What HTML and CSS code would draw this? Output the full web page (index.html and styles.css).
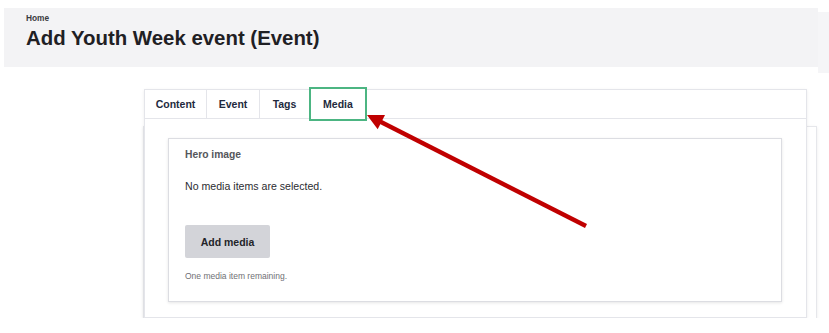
FILE: index.html
```html
<!DOCTYPE html>
<html lang="en">
<head>
    <meta charset="UTF-8">
    <meta name="viewport" content="width=device-width, initial-scale=1.0">
    <title>Add Youth Week event (Event)</title>
    <link rel="stylesheet" href="styles.css">
</head>
<body>
    <div class="top">
        <header class="page-title">
            <div class="crumb">Home</div>
            <h1>Add Youth Week event (Event)</h1>
        </header>
        <div class="edge"></div>
    </div>
    <main class="form-wrap">
        <div class="card">
            <ul class="tabs">
                <li class="tab tab-content">Content</li>
                <li class="tab tab-event">Event</li>
                <li class="tab tab-tags">Tags</li>
                <li class="tab tab-media active">Media</li>
            </ul>
            <div class="panel">
                <div class="field-box">
                    <div class="field-label">Hero image</div>
                    <p class="empty">No media items are selected.</p>
                    <button class="add-btn">Add media</button>
                    <p class="hint">One media item remaining.</p>
                </div>
            </div>
        </div>
    </main>
    <!-- annotation arrow pointing at the Media tab -->
    <svg class="arrow" width="829" height="333" viewBox="0 0 829 333">
        <line x1="586" y1="226" x2="380" y2="121.5" stroke="#c00000" stroke-width="4.5"/>
        <polygon points="367,115 385,115 377.7,129.3" fill="#c00000"/>
    </svg>
</body>
</html>
```

FILE: styles.css
```css
* {
    margin: 0;
    padding: 0;
    box-sizing: border-box;
}
body {
    font-family: "Liberation Sans", Arial, sans-serif;
    color: #232429;
    background: #fff;
}
ul {
    list-style: none;
}
.top {
    display: flex;
    align-items: flex-start;
    padding: 8px 0 0 4px;
}
.page-title {
    width: 814px;
    height: 59px;
    padding: 5px 0 0 22px;
    background: #f3f3f5;
}
.crumb {
    font-size: 8.3px;
    line-height: 10px;
    font-weight: bold;
    color: #3a3b40;
}
.page-title h1 {
    margin-top: 3px;
    font-size: 20.4px;
    line-height: 24px;
    font-weight: bold;
    color: #1f2024;
}
.edge {
    width: 11px;
    height: 61px;
    margin-top: 4px;
    background: #f5f5f7;
}
.form-wrap {
    padding: 16px 0 0 144px;
}
.card {
    position: relative;
    width: 663px;
    background: #fff;
    border: 1px solid #e4e5ea;
    box-shadow: 0 1px 3px rgba(0, 0, 0, 0.08);
}
/* second sheet peeking out beneath the card */
.card::after {
    content: "";
    position: absolute;
    top: 36px;
    left: -2px;
    right: -11px;
    bottom: -8px;
    z-index: -1;
    background: #fff;
    border: 1px solid #e6e7eb;
    box-shadow: 0 1px 3px rgba(0, 0, 0, 0.08);
}
.tabs {
    display: flex;
    height: 29px;
    border-bottom: 1px solid #e4e5ea;
}
.tab {
    height: 28px;
    line-height: 28px;
    text-align: center;
    font-size: 10.5px;
    font-weight: bold;
    color: #222a3d;
    border-right: 1px solid #e4e5ea;
}
.tab-content {
    width: 62px;
}
.tab-event {
    width: 53px;
}
.tab-tags {
    width: 49px;
    border-right: none;
}
.tab-media {
    width: 58px;
    height: 34px;
    margin-top: -3px;
    line-height: 30px;
    border: 2px solid #4cb582;
    background: #fff;
}
.panel {
    padding: 19px 24px 15px 23px;
}
.field-box {
    height: 164px;
    padding: 9px 16px 0;
    border: 1px solid #dcdde2;
    box-shadow: 0 1px 3px rgba(0, 0, 0, 0.1);
}
.field-label {
    font-size: 10.3px;
    line-height: 14px;
    font-weight: bold;
    color: #55565b;
}
.empty {
    margin-top: 17px;
    font-size: 10.6px;
    line-height: 14px;
    color: #2b2c31;
}
.add-btn {
    display: block;
    width: 85px;
    height: 33px;
    margin-top: 32px;
    border: none;
    border-radius: 2px;
    background: #d3d4d9;
    font-family: inherit;
    font-size: 10.5px;
    font-weight: bold;
    color: #232429;
}
.hint {
    margin-top: 12px;
    font-size: 8.5px;
    line-height: 12px;
    color: #6f7075;
}
.arrow {
    position: absolute;
    top: 0;
    left: 0;
    pointer-events: none;
}
```
